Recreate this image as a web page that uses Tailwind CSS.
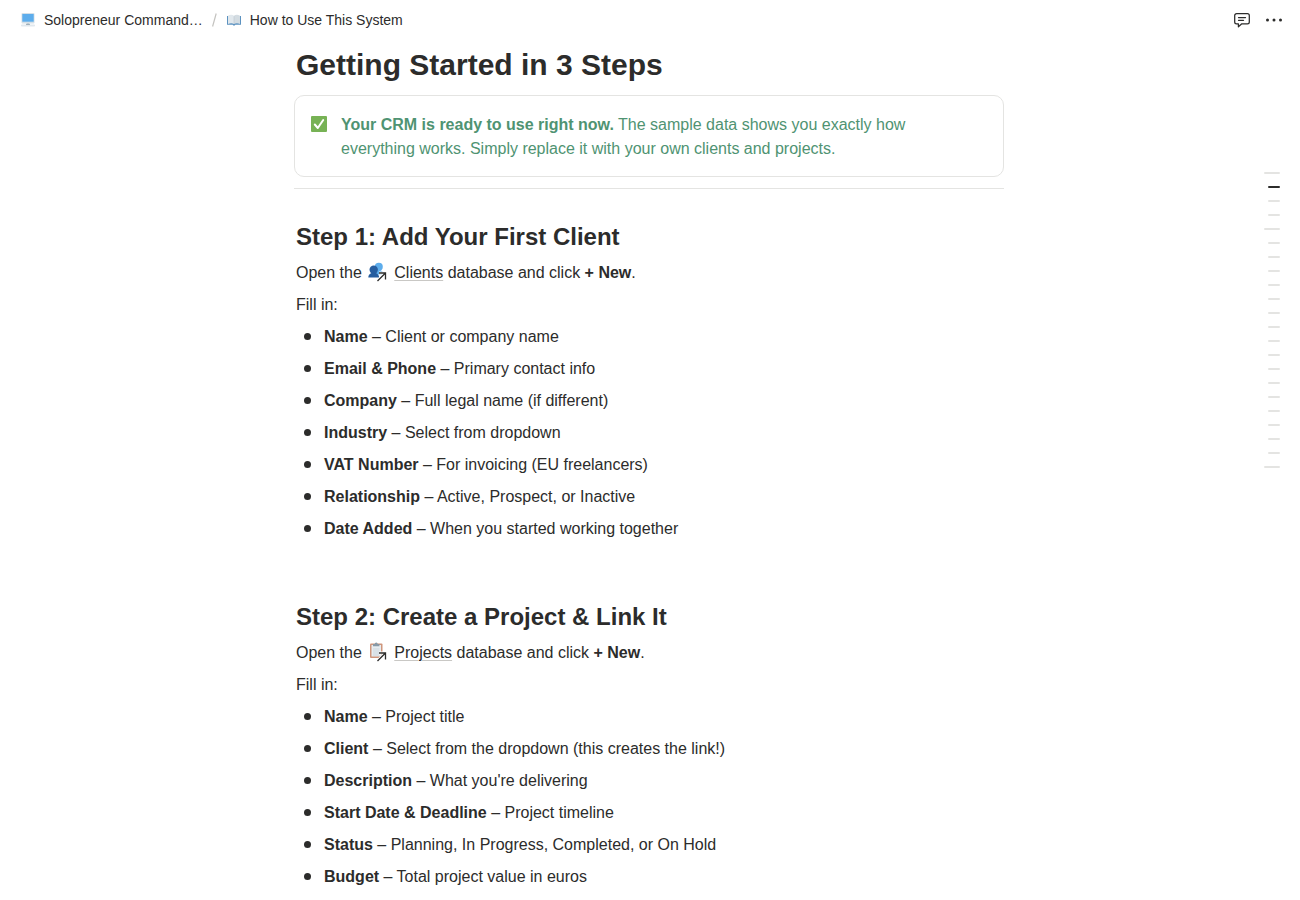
<!DOCTYPE html>
<html lang="en">
<head>
  <meta charset="UTF-8">
  <meta name="viewport" content="width=device-width, initial-scale=1.0">
  <title>How to Use This System</title>
  <script src="https://cdn.jsdelivr.net/npm/@tailwindcss/browser@4"></script>
</head>
<body class="bg-white text-[#2c2c2b] font-['Liberation_Sans',Arial,sans-serif]">

  <!-- Top bar -->
  <header class="flex items-center justify-between h-10 pl-5 pr-2.5 text-sm">
    <nav aria-label="Breadcrumb" class="flex items-center">
      <a href="#" class="flex items-center gap-2">
        <svg class="size-4" viewBox="0 0 16 16">
          <rect x="1.5" y="1" width="13" height="10.5" rx="1" fill="#d5dfe6"/>
          <rect x="2.3" y="2" width="11.4" height="7.7" fill="#5dadec"/>
          <path d="M6.5 11.5h3v1.5h-3z" fill="#9aaab4"/>
          <rect x="1" y="12.4" width="14" height="2.2" rx=".8" fill="#e1e8ed"/>
          <path d="M6 12h4v.8H6z" fill="#99aab5"/>
        </svg>
        <span>Solopreneur Command…</span>
      </a>
      <svg class="w-[23px] h-5" viewBox="0 0 23 20" fill="none" stroke="#c4c3c0" stroke-width="1.2"><path d="M13.2 3.5l-3.6 13"/></svg>
      <a href="#" class="flex items-center gap-2">
        <svg class="size-4" viewBox="0 0 16 16">
          <path d="M1 4h14v8.8H9.3l-.5.7H7.2l-.5-.7H1z" fill="#5c92c0"/>
          <path d="M2 3.700C4 2.400 6.500 2.500 8 3.700v8.200c-1.500-.9-4-.9-6 0z" fill="#e1e8ed"/>
          <path d="M14 3.700C12 2.400 9.500 2.500 8 3.700v8.200c1.500-.9 4-.9 6 0z" fill="#d3dce2"/>
          <path d="M8 4.200v7.700" stroke="#b5c2cb" stroke-width=".5"/>
        </svg>
        <span>How to Use This System</span>
      </a>
    </nav>
    <div class="flex items-center">
      <button type="button" aria-label="Comments" class="flex size-8 items-center justify-center">
        <svg class="size-5" viewBox="0 0 20 20" fill="none" stroke="#2c2c2b" stroke-width="1.25" stroke-linecap="round" stroke-linejoin="round">
          <path d="M4.600 3.700h10.800a1.900 1.900 0 0 1 1.900 1.900v6.300a1.900 1.900 0 0 1-1.900 1.900H9.800l-3.400 3v-3H4.600a1.900 1.900 0 0 1-1.900-1.900V5.600a1.900 1.900 0 0 1 1.900-1.900z"/>
          <path d="M6.500 7.500h7M6.500 10.300h5"/>
        </svg>
      </button>
      <button type="button" aria-label="More" class="flex size-8 items-center justify-center">
        <svg class="size-5" viewBox="0 0 20 20" fill="#2c2c2b">
          <circle cx="3.500" cy="10" r="1.500"/><circle cx="10" cy="10" r="1.500"/><circle cx="16.500" cy="10" r="1.500"/>
        </svg>
      </button>
    </div>
  </header>

  <main class="max-w-[708px] mx-auto pt-[5px] leading-6">
    <h1 class="text-[30px] leading-10 font-bold">Getting Started in 3 Steps</h1>

    <!-- Callout -->
    <div class="flex gap-3 -ml-0.5 mt-2.5 px-4 pt-[17px] pb-[15px] border border-[#e4e4e2] rounded-[10px] text-[#4f9372]">
      <svg class="size-[18px] mt-[3px] shrink-0" viewBox="0 0 18 18">
        <rect x="0" y="0" width="16" height="16" rx="1" fill="#77b255"/>
        <path d="M3.800 8.500l3 3.500 5.400-8" fill="none" stroke="#fff" stroke-width="2" stroke-linecap="round" stroke-linejoin="round"/>
      </svg>
      <p class="max-w-[620px]"><strong>Your CRM is ready to use right now.</strong> The sample data shows you exactly how everything works. Simply replace it with your own clients and projects.</p>
    </div>

    <hr class="-ml-0.5 mt-[11px] border-[#e4e4e2]">

    <!-- Step 1 -->
    <section class="mt-8">
      <h2 class="text-2xl font-bold">Step 1: Add Your First Client</h2>
      <p class="mt-2">Open the
        <a href="#"><svg class="inline-block w-5 h-5 ml-0.5 mr-1.5 align-[-4px]" viewBox="0 0 20 20">
          <path d="M7 12.500c0-3 1.500-4.500 4-4.500s4.500 1.500 4.500 4.500z" fill="#5dadec"/>
          <circle cx="10.800" cy="4.800" r="4" fill="#5dadec"/>
          <path d="M.300 15.500c0-3 2.300-4.700 5.400-4.700s5.400 1.700 5.400 4.700z" fill="#265d9f"/>
          <circle cx="5.700" cy="7.800" r="4.200" fill="#265d9f"/>
          <path d="M9.500 19l8-8M11 11h6.500v6.500" fill="none" stroke="#fff" stroke-width="3"/>
          <path d="M9.500 19l8-8M11 11h6.500v6.500" fill="none" stroke="#2c2c2b" stroke-width="1.300"/>
        </svg><span class="underline decoration-1 decoration-[#c9c8c5] underline-offset-2">Clients</span></a>
        database and click <strong>+ New</strong>.</p>
      <p class="mt-2">Fill in:</p>
      <ul class="mt-2 space-y-2">
        <li class="flex items-center gap-[13px]"><span class="size-[7px] ml-2 mb-0.5 rounded-full bg-[#2c2c2b]"></span><span><strong>Name</strong> – Client or company name</span></li>
        <li class="flex items-center gap-[13px]"><span class="size-[7px] ml-2 mb-0.5 rounded-full bg-[#2c2c2b]"></span><span><strong>Email &amp; Phone</strong> – Primary contact info</span></li>
        <li class="flex items-center gap-[13px]"><span class="size-[7px] ml-2 mb-0.5 rounded-full bg-[#2c2c2b]"></span><span><strong>Company</strong> – Full legal name (if different)</span></li>
        <li class="flex items-center gap-[13px]"><span class="size-[7px] ml-2 mb-0.5 rounded-full bg-[#2c2c2b]"></span><span><strong>Industry</strong> – Select from dropdown</span></li>
        <li class="flex items-center gap-[13px]"><span class="size-[7px] ml-2 mb-0.5 rounded-full bg-[#2c2c2b]"></span><span><strong>VAT Number</strong> – For invoicing (EU freelancers)</span></li>
        <li class="flex items-center gap-[13px]"><span class="size-[7px] ml-2 mb-0.5 rounded-full bg-[#2c2c2b]"></span><span><strong>Relationship</strong> – Active, Prospect, or Inactive</span></li>
        <li class="flex items-center gap-[13px]"><span class="size-[7px] ml-2 mb-0.5 rounded-full bg-[#2c2c2b]"></span><span><strong>Date Added</strong> – When you started working together</span></li>
      </ul>
    </section>

    <!-- Step 2 -->
    <section class="mt-[60px] pb-3">
      <h2 class="text-2xl font-bold">Step 2: Create a Project &amp; Link It</h2>
      <p class="mt-2">Open the
        <a href="#"><svg class="inline-block w-5 h-5 ml-0.5 mr-1.5 align-[-4px]" viewBox="0 0 20 20">
          <rect x="2" y="1.500" width="12.500" height="14.500" rx="1" fill="#cf967c"/>
          <rect x="3.500" y="3" width="9.500" height="11.500" fill="#e6ecf0"/>
          <path d="M5 7h6.500M5 9h6.500M5 11h6.500M5 13h6.500" stroke="#ccd6dd" stroke-width="1"/>
          <path d="M5 2h1.700a1.500 1.500 0 0 1 3 0h1.700v2.300H5z" fill="#8899a6"/>
          <path d="M9.500 19l8-8M11 11h6.500v6.500" fill="none" stroke="#fff" stroke-width="3"/>
          <path d="M9.500 19l8-8M11 11h6.500v6.500" fill="none" stroke="#2c2c2b" stroke-width="1.300"/>
        </svg><span class="underline decoration-1 decoration-[#c9c8c5] underline-offset-2">Projects</span></a>
        database and click <strong>+ New</strong>.</p>
      <p class="mt-2">Fill in:</p>
      <ul class="mt-2 space-y-2">
        <li class="flex items-center gap-[13px]"><span class="size-[7px] ml-2 mb-0.5 rounded-full bg-[#2c2c2b]"></span><span><strong>Name</strong> – Project title</span></li>
        <li class="flex items-center gap-[13px]"><span class="size-[7px] ml-2 mb-0.5 rounded-full bg-[#2c2c2b]"></span><span><strong>Client</strong> – Select from the dropdown (this creates the link!)</span></li>
        <li class="flex items-center gap-[13px]"><span class="size-[7px] ml-2 mb-0.5 rounded-full bg-[#2c2c2b]"></span><span><strong>Description</strong> – What you're delivering</span></li>
        <li class="flex items-center gap-[13px]"><span class="size-[7px] ml-2 mb-0.5 rounded-full bg-[#2c2c2b]"></span><span><strong>Start Date &amp; Deadline</strong> – Project timeline</span></li>
        <li class="flex items-center gap-[13px]"><span class="size-[7px] ml-2 mb-0.5 rounded-full bg-[#2c2c2b]"></span><span><strong>Status</strong> – Planning, In Progress, Completed, or On Hold</span></li>
        <li class="flex items-center gap-[13px]"><span class="size-[7px] ml-2 mb-0.5 rounded-full bg-[#2c2c2b]"></span><span><strong>Budget</strong> – Total project value in euros</span></li>
      </ul>
    </section>
  </main>

  <!-- Floating outline, one bar per heading -->
  <div id="outline" class="fixed right-5 top-[172px] flex flex-col items-end gap-3"></div>

  <script>
    const outline = document.getElementById('outline');
    const topLevel = [0, 4, 21];
    const current = 1;

    for (let i = 0; i < 22; i++) {
      const bar = document.createElement('span');
      const width = topLevel.includes(i) ? 'w-4' : 'w-3';
      const color = i === current ? 'bg-[#2c2c2b]' : 'bg-[#e4e4e2]';
      bar.className = `h-0.5 rounded-xs ${width} ${color}`;
      outline.appendChild(bar);
    }
  </script>
</body>
</html>
